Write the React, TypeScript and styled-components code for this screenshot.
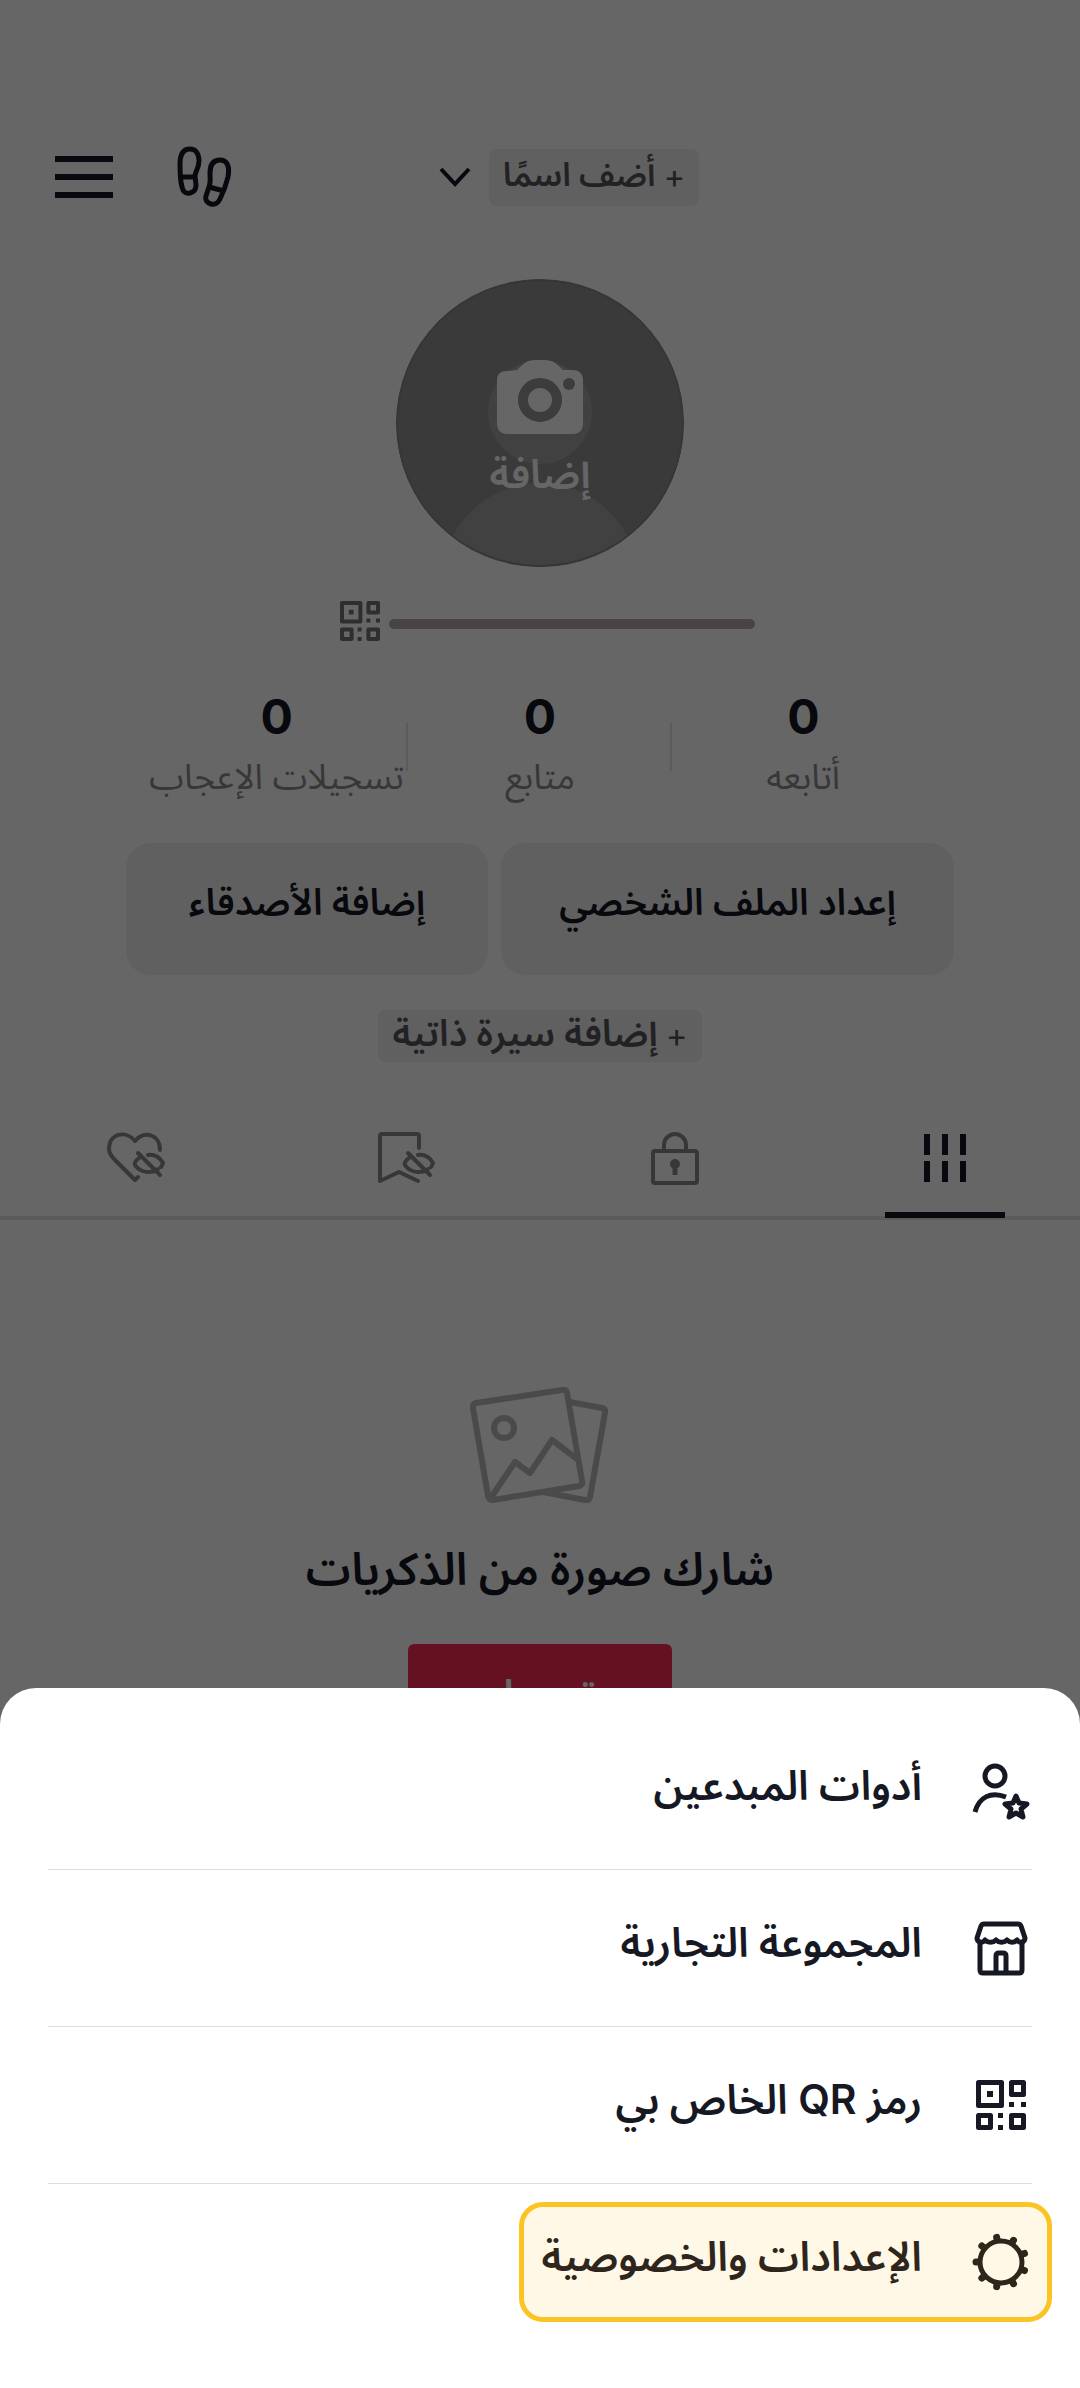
import React from "react";
import styled, { createGlobalStyle } from "styled-components";

const Global = createGlobalStyle`
  *, *::before, *::after { box-sizing: border-box; }
  body { margin: 0; background: #fff; }
  button { font: inherit; color: inherit; border: 0; background: none; padding: 0; margin: 0; cursor: pointer; }
  svg { display: block; flex: none; }
`;

const fontStack = `Inter, "Noto Sans Arabic", "DejaVu Sans", sans-serif`;

const App = () => (
  <Screen dir="rtl" lang="ar">
    <Global />
    <Profile>
      <Header>
        <span />
        <NameGroup>
          <Chip><Plus>+</Plus> أضف اسمًا</Chip>
          <IconButton aria-label="تبديل الحساب"><ChevronIcon /></IconButton>
        </NameGroup>
        <HeaderActions>
          <IconButton aria-label="زيارات الملف الشخصي"><FootstepsIcon /></IconButton>
          <IconButton aria-label="القائمة"><MenuIcon /></IconButton>
        </HeaderActions>
      </Header>

      <Avatar>
        <AvatarArt />
        <AvatarLabel>
          <CameraIcon />
          إضافة
        </AvatarLabel>
      </Avatar>

      <HandleRow>
        <HandleBar />
        <QrIcon size={40} color="#73747b" />
      </HandleRow>

      <Stats>
        {stats.map((label) => (
          <Stat key={label}>
            <StatValue>0</StatValue>
            <StatLabel>{label}</StatLabel>
          </Stat>
        ))}
      </Stats>

      <Actions>
        <ActionButton>إعداد الملف الشخصي</ActionButton>
        <ActionButton>إضافة الأصدقاء</ActionButton>
      </Actions>

      <Chip $large><Plus>+</Plus> إضافة سيرة ذاتية</Chip>

      <Tabs>
        <Tab $active aria-label="المنشورات"><GridIcon /></Tab>
        <Tab aria-label="خاص"><LockIcon /></Tab>
        <Tab aria-label="المحفوظات"><BookmarkHiddenIcon /></Tab>
        <Tab aria-label="الإعجابات"><HeartHiddenIcon /></Tab>
      </Tabs>

      <Empty>
        <PhotosIcon />
        <EmptyTitle>شارك صورة من الذكريات</EmptyTitle>
        <UploadButton>تحميل</UploadButton>
      </Empty>
    </Profile>

    <Scrim />

    <Sheet>
      <SheetRow>
        <SheetButton><CreatorIcon /><SheetLabel>أدوات المبدعين</SheetLabel></SheetButton>
      </SheetRow>
      <SheetRow>
        <SheetButton><ShopIcon /><SheetLabel>المجموعة التجارية</SheetLabel></SheetButton>
      </SheetRow>
      <SheetRow>
        <SheetButton>
          <IconSlot><QrIcon size={50} color="#161823" /></IconSlot>
          <SheetLabel>رمز QR الخاص بي</SheetLabel>
        </SheetButton>
      </SheetRow>
      <SheetRow>
        <SheetButton $highlighted><GearIcon /><SheetLabel>الإعدادات والخصوصية</SheetLabel></SheetButton>
      </SheetRow>
    </Sheet>
  </Screen>
);

const stats = ["أتابعه", "متابع", "تسجيلات الإعجاب"];

const Screen = styled.div`
  position: relative;
  min-height: 100vh;
  overflow: hidden;
  background: #fff;
  color: #161823;
  font-family: ${fontStack};
  font-weight: 600;
`;

const Profile = styled.main`
  display: flex;
  flex-direction: column;
  align-items: center;
  padding-top: 144px;
`;

const Header = styled.header`
  align-self: stretch;
  display: grid;
  grid-template-columns: 1fr auto 1fr;
  align-items: center;
  height: 66px;
  padding: 0 55px;
`;

const NameGroup = styled.div`
  display: flex;
  align-items: center;
  gap: 18px;
  padding-left: 58px;
`;

const Chip = styled.button<{ $large?: boolean }>`
  display: flex;
  align-items: center;
  gap: 8px;
  height: ${(p) => (p.$large ? 52 : 57)}px;
  padding: 0 14px 6px;
  border-radius: 8px;
  background: #f1f1f2;
  color: #55565e;
  font-size: ${(p) => (p.$large ? 37 : 33)}px;
  line-height: 48px;
`;

const Plus = styled.span`
  padding-top: 4px;
  font-weight: 400;
  font-size: 33px;
`;

const IconButton = styled.button`
  display: flex;
`;

const HeaderActions = styled.div`
  display: flex;
  align-items: center;
  justify-content: flex-end;
  gap: 64px;
`;

const Avatar = styled.button`
  position: relative;
  width: 288px;
  height: 288px;
  margin-top: 69px;
  border-radius: 50%;
  overflow: hidden;
`;

const AvatarLabel = styled.span`
  position: absolute;
  inset: 81px 0 auto;
  display: flex;
  flex-direction: column;
  align-items: center;
  gap: 16px;
  color: #fff;
  font-size: 40px;
  line-height: 48px;
`;

const HandleRow = styled.div`
  display: flex;
  align-items: center;
  gap: 9px;
  margin-top: 34px;
  padding-left: 15px;
`;

const HandleBar = styled.span`
  width: 366px;
  height: 10px;
  margin-top: 6px;
  border-radius: 5px;
  background: #b7aaaa;
`;

const Stats = styled.dl`
  align-self: stretch;
  display: grid;
  grid-template-columns: repeat(3, 1fr);
  margin: 46px 145px 0;
`;

const Stat = styled.div`
  position: relative;
  display: flex;
  flex-direction: column;
  align-items: center;
  height: 116px;

  & + &::before {
    content: "";
    position: absolute;
    right: 0;
    top: 36px;
    width: 2px;
    height: 48px;
    background: #e3e3e4;
  }
`;

const StatValue = styled.dd`
  margin: 0;
  font-size: 48px;
  font-weight: 700;
  line-height: 60px;
`;

const StatLabel = styled.dt`
  order: 1;
  color: #8a8b91;
  font-size: 35px;
  font-weight: 400;
  line-height: 58px;
  white-space: nowrap;
`;

const Actions = styled.div`
  align-self: stretch;
  display: grid;
  grid-template-columns: 5fr 4fr;
  gap: 13px;
  margin: 40px 126px 35px;
`;

const ActionButton = styled.button`
  height: 132px;
  padding-bottom: 14px;
  border-radius: 24px;
  background: #f1f1f2;
  font-size: 37px;
  line-height: 56px;
`;

const Tabs = styled.nav`
  align-self: stretch;
  display: grid;
  grid-template-columns: repeat(4, 1fr);
  margin-top: 34px;
  border-bottom: 4px solid #e3e3e4;
`;

const Tab = styled.button<{ $active?: boolean }>`
  position: relative;
  display: flex;
  align-items: center;
  justify-content: center;
  height: 120px;
  padding-top: 4px;

  &::after {
    content: "";
    display: ${(p) => (p.$active ? "block" : "none")};
    position: absolute;
    bottom: -2px;
    width: 120px;
    height: 6px;
    background: #161823;
  }
`;

const Empty = styled.section`
  display: flex;
  flex-direction: column;
  align-items: center;
  padding-top: 167px;
`;

const EmptyTitle = styled.h2`
  margin: 36px 0 45px;
  font-size: 45px;
  font-weight: 600;
  line-height: 60px;
`;

const UploadButton = styled.button`
  width: 264px;
  height: 132px;
  border-radius: 6px;
  background: #fe2c55;
  color: #fff;
  font-size: 40px;
  line-height: 60px;
  padding-bottom: 32px;
`;

const Scrim = styled.div`
  position: absolute;
  inset: 0;
  background: rgba(0, 0, 0, 0.6);
`;

const Sheet = styled.ul`
  position: absolute;
  inset: auto 0 0;
  margin: 0;
  padding: 24px 48px 48px;
  border-radius: 36px 36px 0 0;
  background: #fff;
  list-style: none;
`;

const SheetRow = styled.li`
  display: flex;
  align-items: center;
  height: 157px;

  & + & {
    border-top: 1px solid #dedee0;
  }
`;

const SheetButton = styled.button<{ $highlighted?: boolean }>`
  display: flex;
  align-items: center;
  gap: 50px;
  height: 120px;
  margin-right: -20px;
  padding: 0 17px;
  border: 5px solid ${(p) => (p.$highlighted ? "#fbc324" : "transparent")};
  border-radius: 24px;
  background: ${(p) => (p.$highlighted ? "#fff8e7" : "none")};
  color: ${(p) => (p.$highlighted ? "#2e261c" : "#161823")};
  font-size: 41px;
  line-height: 60px;
  white-space: nowrap;
`;

const SheetLabel = styled.span`
  padding-bottom: 12px;
`;

const IconSlot = styled.span`
  display: flex;
  justify-content: center;
  width: 58px;
`;

const MenuIcon = () => (
  <svg width="58" height="42" viewBox="0 0 58 42" fill="#161823">
    <path d="M0 0h58v6H0zM0 18h58v6H0zM0 36h58v6H0z" />
  </svg>
);

const FootstepsIcon = () => (
  <svg width="56" height="62" viewBox="0 0 56 62" fill="none" stroke="#161823" strokeWidth="5" strokeLinejoin="round">
    <path d="M13 3C6 3 3 9 3 18c0 10 0 16 2 23 1 5 4 7 8 6s6-4 6-8l-1-9c0-4 4-8 4-15C22 8 19 3 13 3z" />
    <path d="M4 31h14" />
    <path d="M43 14c-7 0-10 5-10 13 0 6 1 9-1 14l-3 9c-1 4 1 7 5 8s7-1 9-5c4-8 6-14 8-22 2-11-1-17-8-17z" />
    <path d="M32 41l15 4" />
  </svg>
);

const ChevronIcon = () => (
  <svg width="32" height="20" viewBox="0 0 32 20" fill="none" stroke="#161823" strokeWidth="4">
    <path d="M2 2l14 15L30 2" />
  </svg>
);

const AvatarArt = () => (
  <svg width="288" height="288" viewBox="0 0 288 288">
    <circle cx="144" cy="144" r="144" fill="#919191" />
    <circle cx="144" cy="133" r="52" fill="#a2a2a2" />
    <circle cx="144" cy="302" r="98" fill="#a2a2a2" />
    <circle cx="144" cy="144" r="143" fill="none" stroke="#878787" strokeWidth="2" />
  </svg>
);

const CameraIcon = () => (
  <svg width="86" height="74" viewBox="0 0 86 74">
    <path fill="#fff" d="M20 10C26 4 30 0 38 0h10c8 0 12 4 18 10h10c6 0 10 4 10 10v44c0 6-4 10-10 10H10C4 74 0 70 0 64V20c0-6 4-9 10-9z" />
    <circle cx="43" cy="40" r="17" fill="#fff" stroke="#969696" strokeWidth="10" />
    <circle cx="72" cy="24" r="6" fill="#969696" />
  </svg>
);

const QrIcon = ({ size, color }: { size: number; color: string }) => (
  <svg width={size} height={size} viewBox="0 0 50 50" fill="none" stroke={color} strokeWidth="5" strokeLinejoin="round">
    <path d="M2.500 2.500h23v23h-23zM35.500 2.500h12v12h-12zM2.500 35.500h12v12h-12zM35.500 35.500h12v12h-12z" />
    <path fill={color} stroke="none" d="M11 11h6v6h-6zM33 22h5v5h-5zM45 22h5v5h-5zM22 33h5v5h-5zM22 45h5v5h-5z" />
  </svg>
);

const GridIcon = () => (
  <svg width="42" height="48" viewBox="0 0 42 48" fill="#161823">
    <path d="M0 0h6v21H0zM18 0h6v21h-6zM36 0h6v21h-6zM0 27h6v21H0zM18 27h6v21h-6zM36 27h6v21h-6z" />
  </svg>
);

const LockIcon = () => (
  <svg width="48" height="54" viewBox="0 0 48 54" fill="none" stroke="#8a8b91" strokeWidth="4" strokeLinejoin="round">
    <rect x="2" y="20" width="44" height="32" rx="2" />
    <path d="M13 20v-6a11 11 0 0 1 22 0v6" />
    <circle cx="24" cy="33" r="5" fill="#8a8b91" stroke="none" />
    <path d="M24 34v10" strokeWidth="5" />
  </svg>
);

const hiddenEye = (
  <>
    <path d="M33 26c-4 3-5 5-4 7 5 8 17 9 23 4" />
    <path d="M42 23c7-1 12 3 15 8-1 2-1 3-2 4" />
    <path d="M32 21l22 22" />
  </>
);

const HeartHiddenIcon = () => (
  <svg width="60" height="52" viewBox="-1 0 60 52" fill="none" stroke="#8a8b91" strokeWidth="4" strokeLinecap="round" strokeLinejoin="round">
    <path d="M54 18C54 2 38-2 29 9 20-2 3 1 3 17c0 5 3 8 6 11l20 20 3-3" />
    {hiddenEye}
  </svg>
);

const BookmarkHiddenIcon = () => (
  <svg width="60" height="52" viewBox="-1 0 60 52" fill="none" stroke="#8a8b91" strokeWidth="4" strokeLinecap="round" strokeLinejoin="round">
    <path d="M43 16V4q0-2-2-2H6Q4 2 4 4v45l19-9 19 9" />
    {hiddenEye}
  </svg>
);

const PhotosIcon = () => (
  <svg width="140" height="116" viewBox="0 0 140 116" fill="none" stroke="#b9b9bb" strokeWidth="6" strokeLinejoin="round">
    <path d="M6 16L92 3q4-1 5 3l15 88q1 4-3 5l-86 14q-4 0-5-4L3 21q-1-4 3-5z" />
    <path d="M100 15l32 6q4 1 3 5l-15 84q-1 4-5 3l-42-8" />
    <circle cx="34" cy="41" r="10" />
    <path d="M20 112l25-37 15 11 22-33 25 19" />
  </svg>
);

const CreatorIcon = () => (
  <svg width="58" height="58" viewBox="0 0 58 58" fill="none" stroke="currentColor" strokeWidth="5" strokeLinejoin="round">
    <circle cx="23" cy="14" r="10" />
    <path d="M3 50C7 35 19 29 34 35" />
    <path d="M44 34l3 7 8 1-6 5 2 8-7-4-7 4 2-8-6-5 8-1z" />
  </svg>
);

const ShopIcon = () => (
  <svg width="58" height="58" viewBox="0 0 58 58" fill="none" stroke="currentColor" strokeWidth="5" strokeLinejoin="round">
    <path d="M12 5h34q2 0 3 2l4 12c0 4-5 6-8 2-3 3-7 3-10 0-3 3-8 3-11 0-3 3-8 3-11 0-3 4-8 2-8-2L9 7q1-2 3-2z" />
    <path d="M8 24v27q0 3 3 3h36q3 0 3-3V24M24 53V37q0-3 3-3h4q3 0 3 3v16" />
  </svg>
);

const gearTeeth = Array.from({ length: 9 }, (_, i) => i * 40);

const GearIcon = () => (
  <svg width="58" height="58" viewBox="0 0 58 58" fill="currentColor">
    <circle cx="29" cy="29" r="21" fill="none" stroke="currentColor" strokeWidth="5" />
    {gearTeeth.map((angle) => (
      <g key={angle} transform={`rotate(${angle - 90} 29 29)`}>
        <circle cx="29" cy="4" r="3.500" />
        <path d="M22 8q4-1 4-4h6q0 3 4 4z" />
      </g>
    ))}
  </svg>
);

export default App;
